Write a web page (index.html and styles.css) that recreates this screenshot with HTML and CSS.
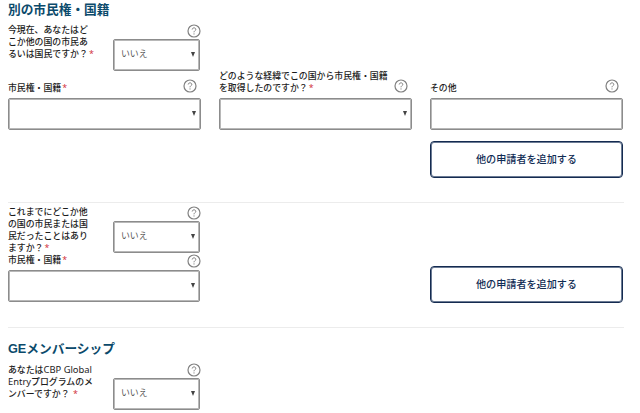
FILE: index.html
```html
<!DOCTYPE html>
<html lang="ja">
<head>
<meta charset="utf-8">
<title>別の市民権・国籍</title>
<link rel="stylesheet" href="styles.css">
</head>
<body>
<svg class="defs" width="0" height="0" aria-hidden="true">
  <symbol id="help" viewBox="0 0 14 14">
    <circle cx="7" cy="7" r="6" fill="none" stroke="#808080" stroke-width="1.2"/>
    <path d="M5.2 5.5C5.2 3.3 8.8 3.3 8.8 5.4C8.8 6.7 7 6.7 7 8.3M7 9.4V10.5" fill="none" stroke="#808080" stroke-width="1"/>
  </symbol>
</svg>
<main class="form">
  <section class="section section-current">
    <h2 class="title">別の市民権・国籍</h2>
    <div class="question">
      <div class="label">今現在、あなたはど<br>こか他の国の市民あ<br>るいは国民ですか？<span class="req">*</span></div>
      <div class="answer">
        <svg class="help"><use href="#help"/></svg>
        <div class="box"><span>いいえ</span><i class="arrow"></i></div>
      </div>
    </div>
    <div class="fields">
      <div class="field">
        <div class="field-head"><div class="label">市民権・国籍<span class="req">*</span></div><svg class="help"><use href="#help"/></svg></div>
        <div class="box"><span></span><i class="arrow"></i></div>
      </div>
      <div class="field">
        <div class="field-head"><div class="label">どのような経緯でこの国から市民権・国籍<br>を取得したのですか？<span class="req">*</span></div><svg class="help"><use href="#help"/></svg></div>
        <div class="box"><span></span><i class="arrow"></i></div>
      </div>
      <div class="field">
        <div class="field-head"><div class="label">その他</div><svg class="help"><use href="#help"/></svg></div>
        <div class="box"></div>
      </div>
    </div>
    <button class="add">他の申請者を追加する</button>
  </section>

  <section class="section section-past">
    <div class="question">
      <div class="label">これまでにどこか他<br>の国の市民または国<br>民だったことはあり<br>ますか？<span class="req">*</span></div>
      <div class="answer">
        <svg class="help"><use href="#help"/></svg>
        <div class="box"><span>いいえ</span><i class="arrow"></i></div>
      </div>
    </div>
    <div class="past-row">
      <div class="field">
        <div class="field-head"><div class="label">市民権・国籍<span class="req">*</span></div><svg class="help"><use href="#help"/></svg></div>
        <div class="box"><span></span><i class="arrow"></i></div>
      </div>
      <button class="add">他の申請者を追加する</button>
    </div>
  </section>

  <section class="section section-ge">
    <h2 class="title">GEメンバーシップ</h2>
    <div class="question">
      <div class="label">あなたは<span class="latin">CBP Global</span><br><span class="latin">Entry</span>プログラムのメ<br>ンバーですか？ <span class="req">*</span></div>
      <div class="answer">
        <svg class="help"><use href="#help"/></svg>
        <div class="box"><span>いいえ</span><i class="arrow"></i></div>
      </div>
    </div>
  </section>
</main>
</body>
</html>
```
FILE: styles.css
```css
* {
  box-sizing: border-box;
}

body {
  margin: 0;
  background: #fff;
  color: #1c1c1c;
  font-family: "Open Sans", "Noto Sans CJK JP", sans-serif;
  font-size: 8.9px;
  line-height: 12px;
  overflow: hidden;
}

.defs {
  position: absolute;
}

.form {
  width: 616px;
  margin-left: 8px;
}

.section {
  border-bottom: 1px solid #ececec;
}

.section-current {
  height: 203px;
  padding-top: 1px;
}

.section-past {
  height: 125px;
  padding-top: 3px;
}

.section-ge {
  padding-top: 12px;
  border-bottom: 0;
}

.title {
  margin: 0;
  height: 23px;
  color: #0b4a6b;
  font-family: "Liberation Sans", "Noto Sans CJK JP", sans-serif;
  font-size: 12.7px;
  font-weight: 700;
  line-height: 18px;
}

.question {
  display: flex;
  justify-content: space-between;
  width: 192px;
  height: 48px;
}

.label {
  font-weight: 500;
  white-space: nowrap;
}

.section-ge .label {
  padding-top: 1px;
}

.latin {
  font-family: "Noto Sans", sans-serif;
  font-size: 9.4px;
  font-weight: 400;
  line-height: 1;
}

.req {
  margin-left: 1px;
  color: #cf2a36;
}

.answer {
  display: flex;
  flex-direction: column;
  align-items: flex-end;
  width: 87px;
}

.help {
  flex: none;
  width: 14px;
  height: 14px;
}

.answer .help,
.past-row .help {
  margin-right: -1px;
}

.answer .help {
  margin-bottom: 1px;
}

.box {
  display: flex;
  align-items: center;
  justify-content: space-between;
  width: 100%;
  height: 32px;
  padding: 0 4px 2px 7px;
  border: 1px solid #8c8c8c;
  border-radius: 2px;
  box-shadow: inset 0 0 0 1px #b8b8b8;
  color: #555;
}

.arrow {
  border: 2.5px solid transparent;
  border-top: 5px solid #444;
  border-bottom: 0;
}

.fields {
  display: flex;
  gap: 18px;
  width: 615px;
  height: 58px;
}

.field {
  width: 193px;
}

.field-head {
  display: flex;
  align-items: flex-end;
  justify-content: space-between;
  height: 26px;
  padding-right: 4px;
}

.field-head .label {
  margin-bottom: 4px;
}

.field-head .help {
  margin-bottom: 5px;
}

.add {
  display: block;
  width: 193px;
  height: 37px;
  margin: 11px 0 0 422px;
  padding: 0 0 2px;
  border: 1px solid #142b50;
  border-radius: 4px;
  background: #fff;
  box-shadow: inset 0 0 0 1px #6b7b94;
  color: #102c54;
  font-family: "Noto Sans CJK JP", sans-serif;
  font-size: 10.1px;
  font-weight: 500;
}

.past-row {
  display: flex;
  justify-content: space-between;
  width: 615px;
}

.past-row .field {
  width: 192px;
}

.past-row .field-head {
  align-items: flex-start;
  height: 16px;
  padding-right: 0;
}

.past-row .field-head .label {
  margin: 0;
}

.past-row .add {
  margin: 12px 0 0;
}
```
